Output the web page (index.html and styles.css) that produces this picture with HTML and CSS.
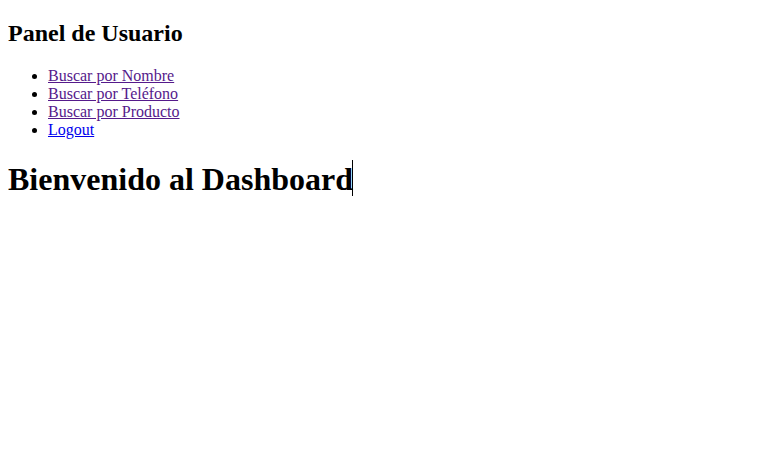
FILE: index.html
```html
<!DOCTYPE html>
<html lang="es">
<head>
<meta charset="utf-8">
<title>Dashboard</title>
<link rel="stylesheet" href="styles.css">
</head>
<body>
<h2 class="panel-title">Panel de Usuario</h2>
<ul class="menu">
  <li><a class="visited" href="#nombre">Buscar por Nombre</a></li>
  <li><a class="visited" href="#telefono">Buscar por Teléfono</a></li>
  <li><a class="visited" href="#producto">Buscar por Producto</a></li>
  <li><a class="fresh" href="#logout">Logout</a></li>
</ul>
<h1 class="welcome">Bienvenido al Dashboard<span class="caret"></span></h1>
</body>
</html>
```
FILE: styles.css
```css
body {
  margin: 8px;
  font-family: "Liberation Serif", "Times New Roman", serif;
  font-size: 16px;
  color: #000;
  background: #fff;
}
.panel-title {
  font-size: 1.5em;
  margin: 12px 0 0.83em;
}
.menu {
  margin: 1em 0;
  padding-left: 40px;
}
.menu a {
  text-decoration: underline;
}
.menu a.visited {
  color: #551a8b;
}
.menu a.fresh {
  color: #0000ee;
}
.welcome {
  font-size: 2em;
  margin: 0.67em 0;
}
.caret {
  display: inline-block;
  width: 1px;
  height: 36px;
  margin-left: -1px;
  background: #000;
  vertical-align: -6px;
}
```
